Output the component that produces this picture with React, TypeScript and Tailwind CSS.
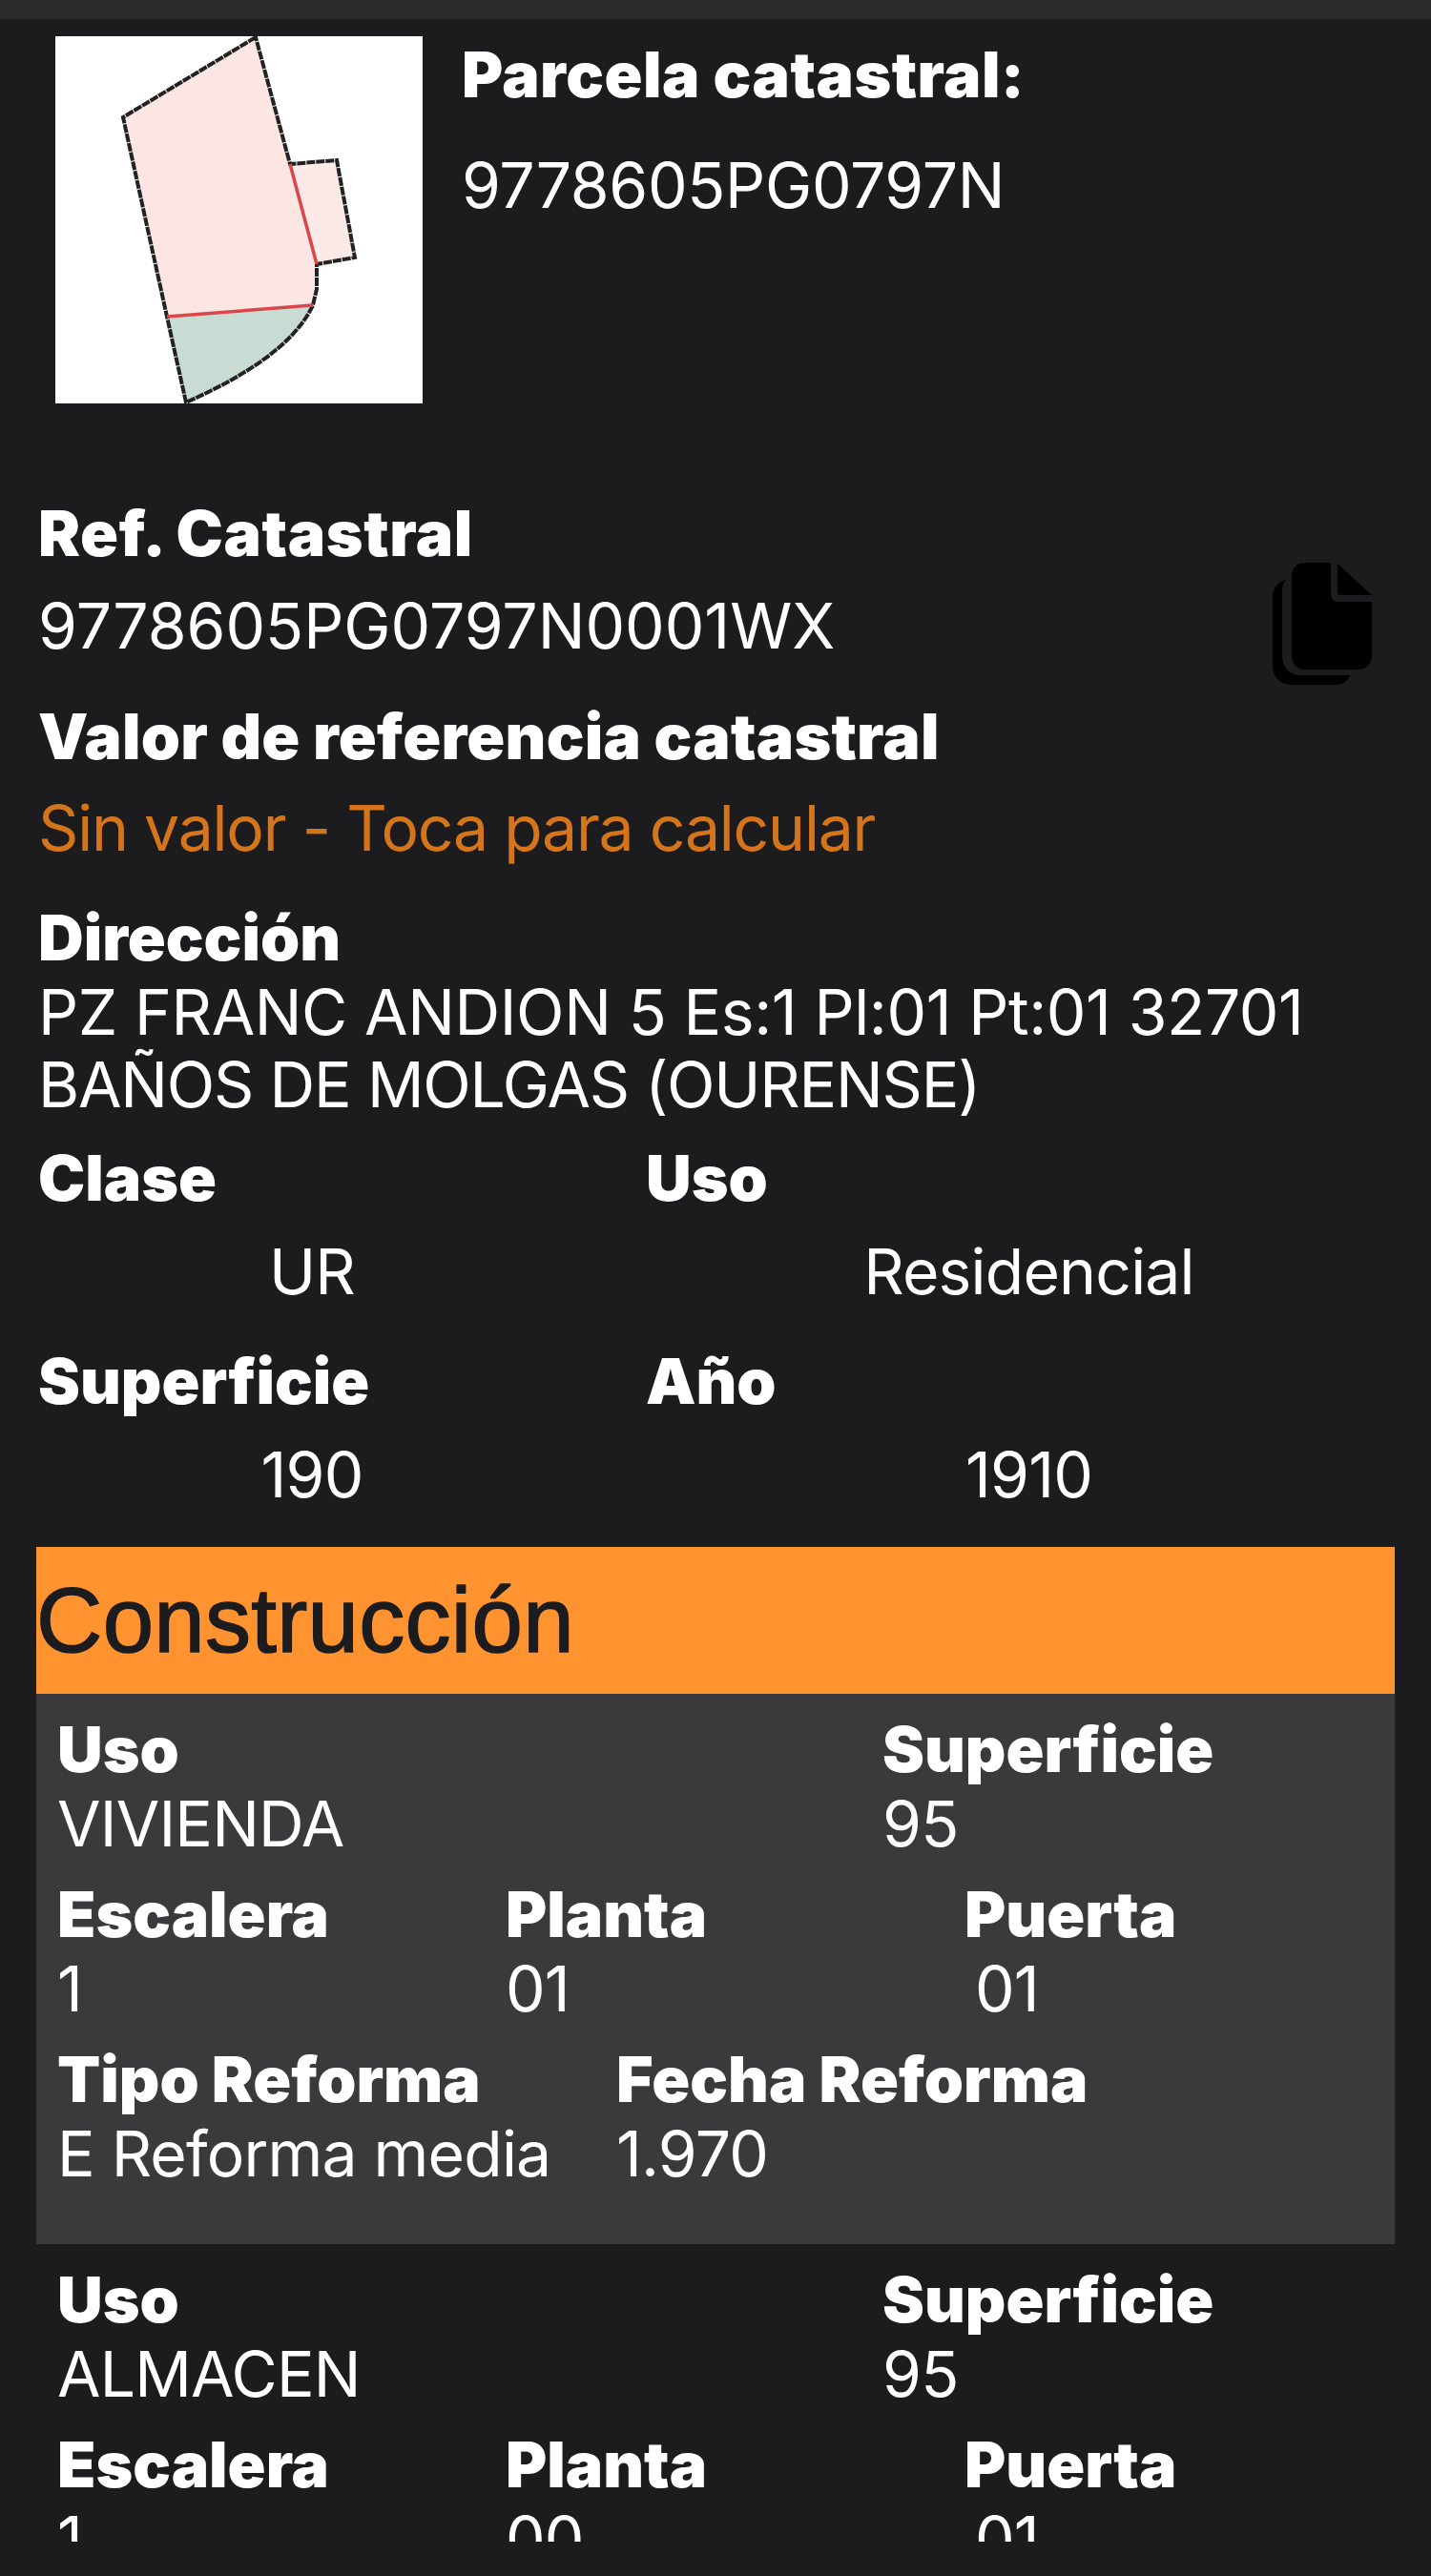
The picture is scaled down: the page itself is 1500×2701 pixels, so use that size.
const label = "font-black tracking-[0px]";

// One stacked block of a construction unit: heading above its value.
function Field({ title, value, className = "" }: { title: string; value: string; className?: string }) {
  return (
    <div className={className}>
      <div className={`${label} h-[78px] leading-[78px]`}>{title}</div>
      <div className="h-[78px] leading-[78px]">{value}</div>
    </div>
  );
}

// Cadastral plot outline with its subdivided sections.
function ParcelMap() {
  return (
    <div className="ml-[58px] h-[385px] w-[385px] shrink-0 bg-white">
      <svg viewBox="0 0 385 385" className="block h-full w-full">
        <path d="M71 85 L210 1 L246 134 L274 239 L274 265 L270 282 L117 294 Z" fill="#fbe6e3" />
        <path d="M246 134 L295 130 L314 232 L274 239 Z" fill="#fbeae7" />
        <path d="M117 294 L270 282 C250 325 195 358 137 384 Z" fill="#c9dcd4" />
        <path d="M210 1 L71 85 L117 294 L137 384 C195 358 250 325 270 282 L274 265 L274 239 L314 232 L295 130 L246 134 Z" fill="none" stroke="#222" strokeWidth="4" strokeDasharray="9 1" />
        <path d="M246 134 L274 239 M117 294 L270 282" fill="none" stroke="#d9474a" strokeWidth="3.5" />
      </svg>
    </div>
  );
}

// Two overlapping solid document sheets.
function CopyIcon() {
  return (
    <svg viewBox="0 0 104 128" className="h-[128px] w-[104px]">
      <path d="M14 18 C5 20 0 27 0 36 V108 C0 120 8 128 20 128 H66 C74 128 79 124 81 118 H30 C18 118 10 110 10 98 V30 C10 25 11 21 14 18 Z" fill="#000" />
      <path d="M34 0 H61 V32 C61 38 64 41 70 41 H104 V98 C104 106 98 112 90 112 H34 C26 112 20 106 20 98 V14 C20 6 26 0 34 0 Z" fill="#000" />
      <path d="M68 1 L104 34 H72 C69 34 68 33 68 30 Z" fill="#000" />
    </svg>
  );
}

export default function App() {
  return (
    <div className="h-[2701px] w-[1500px] overflow-hidden bg-[#1c1c1e] font-['Inter','Liberation_Sans',sans-serif] text-[66px] tracking-[-0.8px] text-white">
      <div className="h-[20px] bg-[#2a2a2c]" />
      <div className="h-[2645px] overflow-hidden">
        <section className="flex pt-[18px]">
          <ParcelMap />
          <div className="ml-[41px]">
            <div className="h-[80px] font-black leading-[80px] tracking-[0.5px]">Parcela catastral:</div>
            <div className="mt-[36px] h-[80px] leading-[80px] tracking-[-0.3px]">9778605PG0797N</div>
          </div>
        </section>

        <section className="mt-[88px] px-[40px]">
          <div className="h-[96px] font-black leading-[96px] tracking-[0.6px]">Ref. Catastral</div>
          <div className="flex h-[98px] items-center justify-between leading-[96px]">
            <span className="tracking-[0px]">9778605PG0797N0001WX</span>
            <span className="mr-[22px] mt-[-4px]"><CopyIcon /></span>
          </div>
          <div className="mt-[19px] h-[96px] font-black leading-[96px] tracking-[0.25px]">Valor de referencia catastral</div>
          <div className="h-[96px] leading-[96px] tracking-[-1.2px] text-[#d4751c]">Sin valor - Toca para calcular</div>
          <div className={`${label} mt-[28px] h-[79px] leading-[79px]`}>Dirección</div>
          <div className="leading-[76px]">
            <span className="tracking-[-0.4px]">PZ FRANC ANDION 5 Es:1 Pl:01 Pt:01 32701</span>
            <br />
            <span className="tracking-[-1.2px]">BAÑOS DE MOLGAS (OURENSE)</span>
          </div>
          <div className="mr-[-20px] mt-[11px] grid grid-cols-[637px_1fr]">
            <div className={`${label} h-[98px] leading-[98px]`}>Clase</div>
            <div className={`${label} h-[98px] leading-[98px]`}>Uso</div>
            <div className="h-[98px] w-[574px] text-center leading-[98px]">UR</div>
            <div className="h-[98px] text-center leading-[98px]">Residencial</div>
            <div className={`${label} mt-[17px] h-[98px] leading-[98px]`}>Superficie</div>
            <div className={`${label} mt-[17px] h-[98px] leading-[98px]`}>Año</div>
            <div className="h-[98px] w-[574px] text-center leading-[98px]">190</div>
            <div className="h-[98px] text-center leading-[98px]">1910</div>
          </div>
        </section>

        <section className="mx-[38px] mt-[27px]">
          <div className="flex h-[154px] items-center bg-[#ff9330] font-['Liberation_Sans',sans-serif] text-[96px] tracking-[0.3px] text-[#1c1c1e] [-webkit-text-stroke:1.5px_#1c1c1e]">Construcción</div>
          <div className="h-[577px] bg-[#3a3a3c] px-[22px] pt-[19px]">
            <div className="flex"><Field title="Uso" value="VIVIENDA" className="w-[865px]" /><Field title="Superficie" value="95" /></div>
            <div className="mt-[17px] flex">
              <Field title="Escalera" value="1" className="w-[470px]" />
              <Field title="Planta" value="01" className="w-[481px]" />
              <Field title="Puerta" value="01" className="[&>div:last-child]:pl-[11px]" />
            </div>
            <div className="mt-[17px] flex">
              <Field title="Tipo Reforma" value="E Reforma media" className="w-[586px]" />
              <Field title="Fecha Reforma" value="1.970" />
            </div>
          </div>
          <div className="px-[22px] pt-[19px]">
            <div className="flex"><Field title="Uso" value="ALMACEN" className="w-[865px]" /><Field title="Superficie" value="95" /></div>
            <div className="mt-[17px] flex">
              <Field title="Escalera" value="1" className="w-[470px]" />
              <Field title="Planta" value="00" className="w-[481px]" />
              <Field title="Puerta" value="01" className="[&>div:last-child]:pl-[11px]" />
            </div>
          </div>
        </section>
      </div>
    </div>
  );
}
